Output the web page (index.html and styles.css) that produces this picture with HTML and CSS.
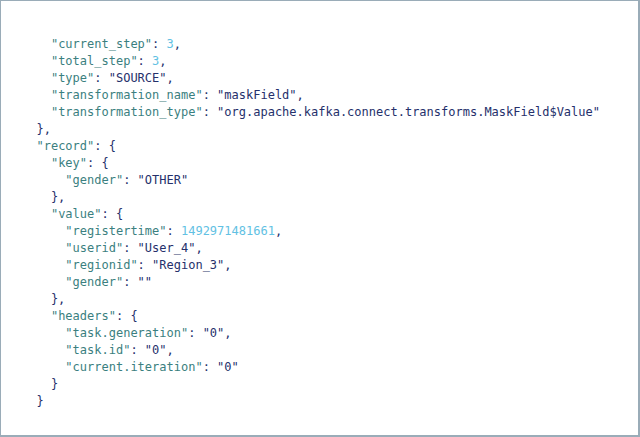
FILE: index.html
```html
<!DOCTYPE html>
<html>
<head>
<meta charset="utf-8">
<link rel="stylesheet" href="styles.css">
</head>
<body>
<div class="frame">
<pre class="code"><span class="p">    </span><span class="k">"current_step"</span><span class="p">: </span><span class="n">3</span><span class="p">,</span>
<span class="p">    </span><span class="k">"total_step"</span><span class="p">: </span><span class="n">3</span><span class="p">,</span>
<span class="p">    </span><span class="k">"type"</span><span class="p">: </span><span class="s">"SOURCE"</span><span class="p">,</span>
<span class="p">    </span><span class="k">"transformation_name"</span><span class="p">: </span><span class="s">"maskField"</span><span class="p">,</span>
<span class="p">    </span><span class="k">"transformation_type"</span><span class="p">: </span><span class="s">"org.apache.kafka.connect.transforms.MaskField$Value"</span>
<span class="p">  },</span>
<span class="p">  </span><span class="k">"record"</span><span class="p">: {</span>
<span class="p">    </span><span class="k">"key"</span><span class="p">: {</span>
<span class="p">      </span><span class="k">"gender"</span><span class="p">: </span><span class="s">"OTHER"</span>
<span class="p">    },</span>
<span class="p">    </span><span class="k">"value"</span><span class="p">: {</span>
<span class="p">      </span><span class="k">"registertime"</span><span class="p">: </span><span class="n">1492971481661</span><span class="p">,</span>
<span class="p">      </span><span class="k">"userid"</span><span class="p">: </span><span class="s">"User_4"</span><span class="p">,</span>
<span class="p">      </span><span class="k">"regionid"</span><span class="p">: </span><span class="s">"Region_3"</span><span class="p">,</span>
<span class="p">      </span><span class="k">"gender"</span><span class="p">: </span><span class="s">""</span>
<span class="p">    },</span>
<span class="p">    </span><span class="k">"headers"</span><span class="p">: {</span>
<span class="p">      </span><span class="k">"task.generation"</span><span class="p">: </span><span class="s">"0"</span><span class="p">,</span>
<span class="p">      </span><span class="k">"task.id"</span><span class="p">: </span><span class="s">"0"</span><span class="p">,</span>
<span class="p">      </span><span class="k">"current.iteration"</span><span class="p">: </span><span class="s">"0"</span>
<span class="p">    }</span>
<span class="p">  }</span></pre>
</div>
</body>
</html>
```
FILE: styles.css
```css
html, body {
  margin: 0;
  padding: 0;
  background: #ffffff;
}
.frame {
  box-sizing: border-box;
  width: 640px;
  height: 437px;
  border: 1px solid #9aacb8;
  border-width: 1px 2px 2px 1px;
  background: #ffffff;
  overflow: hidden;
}
.code {
  margin: 0;
  padding: 35px 0 0 21px;
  font-family: "DejaVu Sans Mono", monospace;
  font-size: 12px;
  line-height: 17px;
  color: #25306b;
}
.k { color: #3b7f80; }
.s { color: #25306b; }
.n { color: #62c1e3; }
.p { color: #25306b; }
```
